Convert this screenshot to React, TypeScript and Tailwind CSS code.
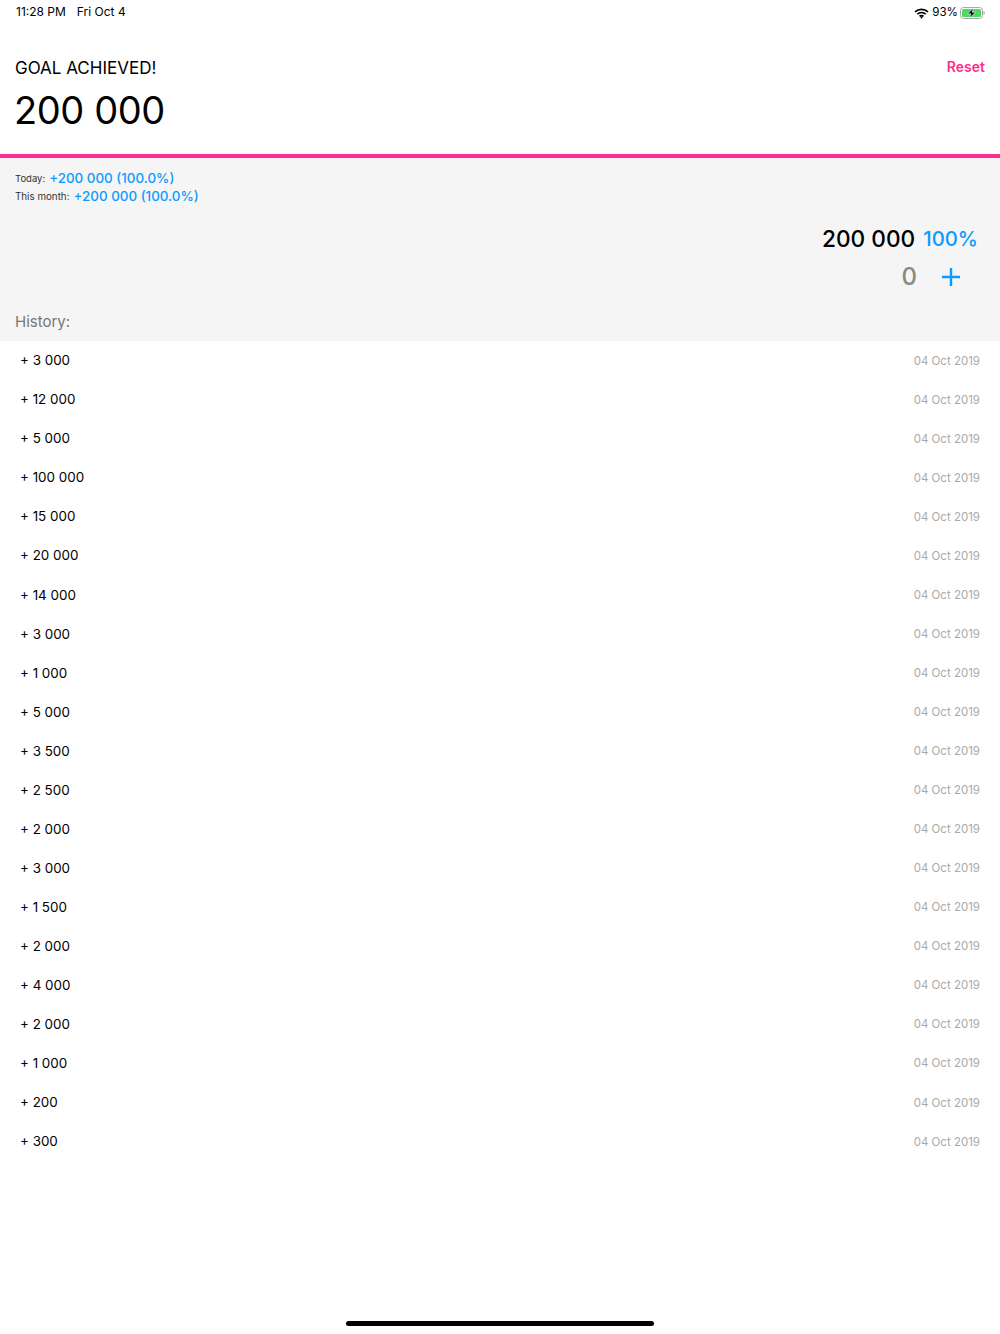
const rows = [
  "3 000", "12 000", "5 000", "100 000", "15 000", "20 000", "14 000", "3 000", "1 000", "5 000", "3 500",
  "2 500", "2 000", "3 000", "1 500", "2 000", "4 000", "2 000", "1 000", "200", "300",
];

function Wifi() {
  return (
    <svg width="15" height="11" viewBox="0 0 15 11" fill="none" stroke="#000" strokeWidth="1.7">
      <path d="M1 3.9C4.7.4 10.3.4 14 3.9" />
      <path d="M3.3 6.2c2.4-2.2 6-2.2 8.4 0" />
      <path d="M5.5 8.3c1.2-.9 2.8-.9 4 0" />
      <circle cx="7.500" cy="9.600" r="1" fill="#000" stroke="none" />
    </svg>
  );
}

function Battery() {
  return (
    <svg width="25" height="12" viewBox="0 0 25 12">
      <rect x="0.500" y="0.500" width="22" height="11" rx="3" fill="none" stroke="#a8a8a8" />
      <rect x="2" y="2" width="19" height="8" rx="1.500" fill="#4cd964" />
      <path d="M23.500 4v4c.8-.3 1.300-1.100 1.300-2s-.5-1.700-1.300-2z" fill="#a8a8a8" />
      <path d="M13.500 1 7.500 6.800h3.300L9.500 11l6-5.800h-3.300z" fill="#000" stroke="#fff" strokeWidth="0.600" />
    </svg>
  );
}

export default function App() {
  return (
    <div className="w-[1000px] h-[1334px] bg-white flex flex-col overflow-hidden font-['Inter',sans-serif] text-black">
      <div className="h-6 pl-4 pr-[15px] flex items-center justify-between text-[12px] leading-none">
        <div className="flex gap-[11px]">
          <span>11:28 PM</span>
          <span>Fri Oct 4</span>
        </div>
        <div className="flex items-center gap-[3px] mt-[2px]">
          <Wifi />
          <span className="text-[11.600px] mr-[-1px]">93%</span>
          <Battery />
        </div>
      </div>

      <div className="h-[130px] px-[15px] pt-[32px] flex justify-between items-start shrink-0">
        <div>
          <div className="text-[17px] leading-[24px]">GOAL ACHIEVED!</div>
          <div className="text-[38px] leading-[48px] mt-[6px] -ml-[1px] tracking-[-0.4px]">200 000</div>
        </div>
        <button className="text-[14px] leading-[22px] font-semibold text-[#ff2d8e]">Reset</button>
      </div>

      <div className="h-1 bg-[#ff2d8e] shrink-0" />

      <div className="h-[183px] bg-[#f5f5f5] px-[15px] pt-[11px] flex flex-col shrink-0">
        <div className="flex items-center gap-[4px] h-[18px]">
          <span className="text-[9.500px] text-[#333] mt-[2px]">Today:</span>
          <span className="text-[13.400px] font-medium text-[#0a9bff]">+200 000 (100.0%)</span>
        </div>
        <div className="flex items-center gap-[4px] h-[18px]">
          <span className="text-[9.800px] text-[#333] mt-[2px]">This month:</span>
          <span className="text-[13.400px] font-medium text-[#0a9bff]">+200 000 (100.0%)</span>
        </div>
        <div className="flex justify-end items-center gap-2 mt-[19px] pr-[7px] h-[30px]">
          <span className="text-[22.700px] font-medium">200 000</span>
          <span className="text-[20.300px] font-medium text-[#0a9bff]">100%</span>
        </div>
        <div className="flex justify-end items-center mt-[8px] h-[30px] pr-[25px]">
          <span className="text-[24px] font-medium text-[#888]">0</span>
          <svg className="ml-[25px]" width="18" height="18" viewBox="0 0 18 18" stroke="#0a9bff" strokeWidth="2.400">
            <path d="M9 0v18M0 9h18" />
          </svg>
        </div>
        <div className="mt-[19px] text-[15px] leading-[22px] text-[#777]">History:</div>
      </div>

      <div className="flex flex-col -mt-[0.250px]">
        {rows.map((row, i) => (
          <div key={i} className="h-[39.050px] px-5 flex items-center justify-between">
            <span className="text-[13.400px]">+ {row}</span>
            <span className="text-[11.500px] text-[#aaa] mt-[2px]">04 Oct 2019</span>
          </div>
        ))}
      </div>

      <div className="mt-auto mb-[8px] mx-auto w-[308px] h-[5px] rounded-full bg-black" />
    </div>
  );
}
